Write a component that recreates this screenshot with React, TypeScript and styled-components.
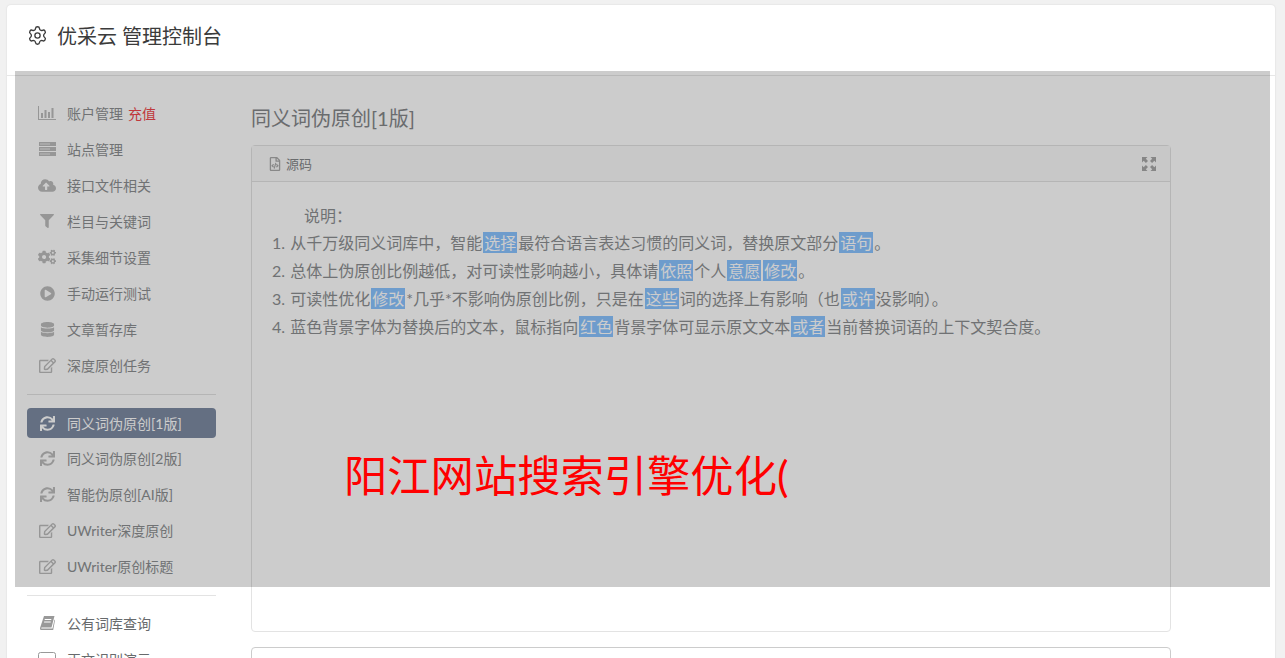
import React from 'react';
import styled, { createGlobalStyle } from 'styled-components';
import { Settings } from 'lucide-react';
import {
  FaCloudUploadAlt,
  FaCogs,
  FaDatabase,
  FaFilter,
  FaPlayCircle,
  FaRegEdit,
  FaRegFileCode,
  FaSync,
} from 'react-icons/fa';

const FONT = `Lato, "Noto Sans CJK SC", sans-serif`;

const GlobalStyle = createGlobalStyle`
  html, body {
    margin: 0;
    height: 658px;
    overflow: hidden;
    background: #f1f1f1;
    font-family: ${FONT};
  }
`;

const Page = styled.div`
  position: relative;
  height: 658px;
  padding: 5px 10px 0 7px;
  box-sizing: border-box;
  overflow: hidden;
`;

const Card = styled.div`
  background: #fff;
  border-radius: 4px 4px 0 0;
  box-shadow: 0 0 2px rgba(0, 0, 0, 0.12);
  height: 700px;
`;

const Header = styled.div`
  display: flex;
  align-items: center;
  gap: 9px;
  height: 60px;
  padding: 0 0 10px 20px;
  border-bottom: 1px solid #e7e7e7;
  color: #3b3b3b;
  font-size: 20px;
`;

const Body = styled.div`
  display: flex;
  padding: 19px 0 0 20px;
`;

const Sidebar = styled.div`
  width: 189px;
  flex: none;
`;

const Item = styled.div<{ $active?: boolean; $clear?: boolean }>`
  display: flex;
  align-items: center;
  height: ${(p) => (p.$active ? 30 : 36)}px;
  padding-left: 11px;
  border-radius: 4px;
  font-size: 14px;
  color: ${(p) => (p.$active ? '#fff' : p.$clear ? '#676a6c' : '#8d8f91')};
  background: ${(p) => (p.$active ? '#7d8ba3' : 'transparent')};
  margin: ${(p) => (p.$active ? '13px 0 2px' : '0')};
`;

const IconSlot = styled.span<{ $active?: boolean; $clear?: boolean }>`
  display: flex;
  align-items: center;
  justify-content: center;
  width: 18px;
  margin-right: 11px;
  color: ${(p) => (p.$active ? '#fff' : p.$clear ? '#999' : '#bcbcbc')};
  font-size: 16px;
`;

const Recharge = styled.span`
  color: #f0474c;
  margin-left: 5px;
`;

const Divider = styled.div`
  height: 1px;
  margin: 11px 0 9px;
  background: #e3e3e3;
`;

const Main = styled.div`
  margin-left: 35px;
  width: 920px;
`;

const Title = styled.div`
  height: 50px;
  padding-top: 10px;
  box-sizing: border-box;
  font-size: 20px;
  color: #85878a;
  line-height: 26px;
`;

const Panel = styled.div`
  height: 487px;
  border: 1px solid #e3e3e3;
  border-radius: 4px;
  box-sizing: border-box;
  margin-bottom: 15px;
`;

const PanelHead = styled.div`
  display: flex;
  align-items: center;
  gap: 4px;
  height: 35px;
  padding: 0 14px 0 16px;
  background: #fbfbfb;
  border-bottom: 1px solid #e3e3e3;
  font-size: 13px;
  color: #85878a;
`;

const HeadSpacer = styled.span`
  flex: 1;
`;

const PanelBody = styled.div`
  padding: 20px 20px;
  font-size: 16px;
  line-height: 28px;
  word-spacing: 1px;
  color: #8d8f91;
`;

const Line = styled.div<{ $indent?: boolean }>`
  padding-left: ${(p) => (p.$indent ? 32 : 0)}px;
  height: ${(p) => (p.$indent ? 27 : 28)}px;
  white-space: nowrap;
`;

const Mark = styled.span`
  display: inline-block;
  height: 21px;
  line-height: 21px;
  padding: 0 1px;
  margin: 0 1px;
  background: #8ac4ff;
  color: #fff;
`;

const NextPanel = styled.div`
  height: 60px;
  border: 1px solid #ccc;
  border-radius: 4px;
`;

const Overlay = styled.div`
  position: absolute;
  left: 15px;
  top: 71px;
  width: 1255px;
  height: 516px;
  background: rgba(0, 0, 0, 0.2);
`;

const OverlayText = styled.div`
  position: absolute;
  left: 329px;
  top: 372px;
  font-size: 43.3px;
  line-height: 64px;
  color: #ff0000;
  white-space: nowrap;
`;

const ChartIcon = () => (
  <svg width="18" height="14" viewBox="0 0 18 14" fill="currentColor">
    <path d="M0 0h1v13h17v1H0z" />
    <path d="M3 7h2v5H3zM6.500 4h2v8h-2zM10 6h2v6h-2zM13.500 2h2v10h-2z" />
  </svg>
);

const ServerIcon = () => (
  <svg width="17" height="14" viewBox="0 0 17 14" fill="currentColor">
    <path d="M0 0h17v4H0zM0 5h17v4H0zM0 10h17v4H0z" />
    <path d="M1 1.500h10v1H1zM1 6.500h10v1H1zM1 11.500h10v1H1z" fill="#fff" opacity="0.7" />
  </svg>
);

const BookIcon = () => (
  <svg width="15" height="14" viewBox="0 0 15 14" fill="currentColor">
    <path d="M4 0h10.500l-3 11.500H1.500l-.3 1h11.300l2-9 .5.800L13.200 14H1.500C.4 14-.2 13 .1 11.800z" />
    <path d="M4.800 3h6.500v1H4.600zM4.200 5.500h6.500v1H4z" fill="#fff" />
  </svg>
);

const ExpandIcon = () => (
  <svg width="14" height="14" viewBox="0 0 14 14" fill="#a8a8a8">
    <path d="M0 0h5.500L3.800 1.700 6 3.900 3.900 6 1.700 3.800 0 5.500zM14 0v5.500l-1.700-1.700L10.100 6 8 3.900l2.200-2.200L8.500 0zM0 14V8.500l1.700 1.700L3.900 8 6 10.100l-2.200 2.200L5.500 14zM14 14H8.500l1.700-1.700L8 10.100 10.100 8l2.200 2.200L14 8.500z" />
  </svg>
);

const BoxIcon = () => (
  <svg width="18" height="14" viewBox="0 0 18 14" fill="none" stroke="currentColor">
    <rect x="0.500" y="0.500" width="17" height="13" rx="2" />
  </svg>
);

const topItems = [
  { icon: <ChartIcon />, label: '账户管理', extra: true },
  { icon: <ServerIcon />, label: '站点管理' },
  { icon: <FaCloudUploadAlt size={19} />, label: '接口文件相关' },
  { icon: <FaFilter size={14} />, label: '栏目与关键词' },
  { icon: <FaCogs size={18} />, label: '采集细节设置' },
  { icon: <FaPlayCircle size={15} />, label: '手动运行测试' },
  { icon: <FaDatabase size={15} />, label: '文章暂存库' },
  { icon: <FaRegEdit size={17} />, label: '深度原创任务' },
];

const midItems = [
  { icon: <FaSync size={15} />, label: '同义词伪原创[1版]', active: true },
  { icon: <FaSync size={15} />, label: '同义词伪原创[2版]' },
  { icon: <FaSync size={15} />, label: '智能伪原创[AI版]' },
  { icon: <FaRegEdit size={17} />, label: 'UWriter深度原创' },
  { icon: <FaRegEdit size={17} />, label: 'UWriter原创标题' },
];

const bottomItems = [
  { icon: <BookIcon />, label: '公有词库查询', clear: true },
  { icon: <BoxIcon />, label: '正文识别演示', clear: true },
];

type NavItem = {
  icon: React.ReactNode;
  label: string;
  extra?: boolean;
  active?: boolean;
  clear?: boolean;
};

const NavList = ({ items }: { items: NavItem[] }) => (
  <>
    {items.map((it) => (
      <Item key={it.label} $active={it.active} $clear={it.clear}>
        <IconSlot $active={it.active} $clear={it.clear}>
          {it.icon}
        </IconSlot>
        {it.label}
        {it.extra && <Recharge>充值</Recharge>}
      </Item>
    ))}
  </>
);

export default function App() {
  return (
    <Page>
      <GlobalStyle />
      <Card>
        <Header>
          <Settings size={21} strokeWidth={1.5} />
          优采云 管理控制台
        </Header>
        <Body>
          <Sidebar>
            <NavList items={topItems} />
            <Divider />
            <NavList items={midItems} />
            <Divider />
            <NavList items={bottomItems} />
          </Sidebar>
          <Main>
            <Title>同义词伪原创[1版]</Title>
            <Panel>
              <PanelHead>
                <FaRegFileCode size={14} color="#aaa" />
                源码
                <HeadSpacer />
                <ExpandIcon />
              </PanelHead>
              <PanelBody>
                <Line $indent>说明：</Line>
                <Line>1. 从千万级同义词库中，智能<Mark>选择</Mark>最符合语言表达习惯的同义词，替换原文部分<Mark>语句</Mark>。</Line>
                <Line>2. 总体上伪原创比例越低，对可读性影响越小，具体请<Mark>依照</Mark>个人<Mark>意愿</Mark><Mark>修改</Mark>。</Line>
                <Line>3. 可读性优化<Mark>修改</Mark>*几乎*不影响伪原创比例，只是在<Mark>这些</Mark>词的选择上有影响（也<Mark>或许</Mark>没影响）。</Line>
                <Line>4. 蓝色背景字体为替换后的文本，鼠标指向<Mark>红色</Mark>背景字体可显示原文文本<Mark>或者</Mark>当前替换词语的上下文契合度。</Line>
              </PanelBody>
            </Panel>
            <NextPanel />
          </Main>
        </Body>
      </Card>
      <Overlay>
        <OverlayText>阳江网站搜索引擎优化(</OverlayText>
      </Overlay>
    </Page>
  );
}
